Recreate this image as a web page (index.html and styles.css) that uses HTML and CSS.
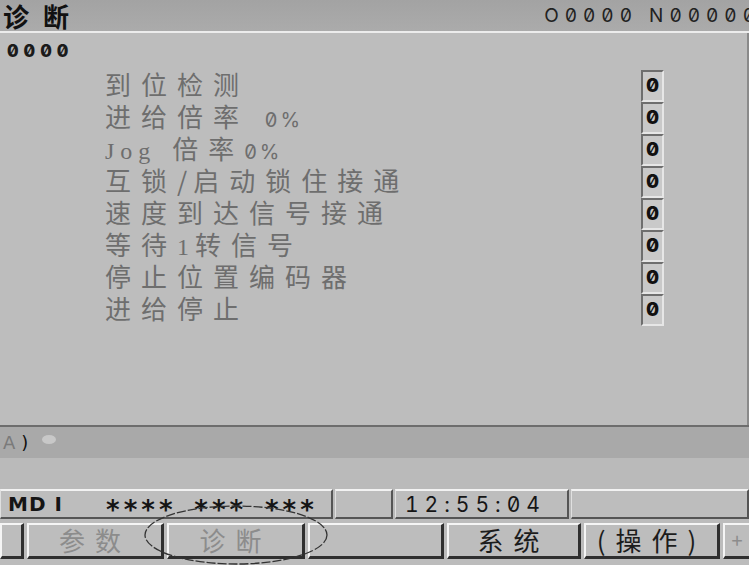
FILE: index.html
```html
<!DOCTYPE html>
<html lang="zh">
  <head>
    <meta charset="UTF-8" />
    <meta name="viewport" content="width=device-width, initial-scale=1" />
    <title>诊断</title>
    <link rel="stylesheet" href="styles.css">
  </head>
  <body>
    <header class="topbar">
      <span class="title">诊断</span>
      <span class="prog">O0000 N00000</span>
    </header>

    <main class="diag">
      <div class="diag-no">0000</div>
      <div class="rows">
        <div class="row"><span class="label">到位检测</span><span class="val">0</span></div>
        <div class="row"><span class="label">进给倍率 <span class="num">0%</span></span><span class="val">0</span></div>
        <div class="row"><span class="label"><span class="lat">Jog</span> 倍率<span class="num">0%</span></span><span class="val">0</span></div>
        <div class="row"><span class="label">互锁<span class="slash">/</span>启动锁住接通</span><span class="val">0</span></div>
        <div class="row"><span class="label">速度到达信号接通</span><span class="val">0</span></div>
        <div class="row"><span class="label">等待<span class="lat">1</span>转信号</span><span class="val">0</span></div>
        <div class="row"><span class="label">停止位置编码器</span><span class="val">0</span></div>
        <div class="row"><span class="label">进给停止</span><span class="val">0</span></div>
      </div>
    </main>

    <div class="input-line">
      <span class="prompt-a">A</span><span class="prompt-b">)</span><span class="cursor"></span>
    </div>
    <div class="msg-line"></div>

    <div class="status">
      <div class="cell mode"><b>MD I</b><span class="stars">**** *** ***</span></div>
      <div class="cell"></div>
      <div class="cell clock">12:55:04</div>
      <div class="cell"></div>
    </div>

    <nav class="softkeys">
      <div class="key"></div>
      <div class="key off">参数</div>
      <div class="key off">诊断</div>
      <div class="key"></div>
      <div class="key">系统</div>
      <div class="key">(操作)</div>
      <div class="key off plus">+</div>
    </nav>

    <svg class="mark" width="186" height="62" viewBox="0 0 186 62">
      <ellipse cx="93" cy="31" rx="91" ry="29" fill="none" stroke="#333" stroke-width="1.3" stroke-dasharray="9 2" />
    </svg>
  </body>
</html>
```

FILE: styles.css
```css
* {
  margin: 0;
  padding: 0;
  box-sizing: border-box;
}
body {
  width: 749px;
  height: 565px;
  overflow: hidden;
  position: relative;
  background: #bdbdbd;
  font-family: "Noto Sans CJK SC", "DejaVu Sans", sans-serif;
  display: flex;
  flex-direction: column;
}

/* Top bar */
.topbar {
  height: 33px;
  background: linear-gradient(#a3a3a3, #ababab);
  border-bottom: 2px solid #ececec;
  display: flex;
  justify-content: space-between;
  align-items: center;
  padding-left: 3px;
}
.title {
  font-size: 26px;
  font-weight: 700;
  color: #111;
  letter-spacing: 14px;
  line-height: 30px;
}
.prog {
  font-family: Inter, sans-serif;
  font-variant-numeric: slashed-zero tabular-nums;
  font-size: 19px;
  color: #222;
  letter-spacing: 6px;
  margin-right: -12px;
}

/* Diagnosis area */
.diag {
  height: 392px;
  border-right: 2px solid #8a8a8a;
  padding-top: 8px;
}
.diag-no {
  font-family: Inter, sans-serif;
  font-variant-numeric: slashed-zero tabular-nums;
  font-weight: 800;
  font-size: 18px;
  line-height: 20px;
  letter-spacing: 5px;
  color: #1a1a1a;
  padding-left: 7px;
}
.rows {
  margin-top: 8px;
  padding-left: 105px;
  padding-right: 83px;
}
.row {
  display: grid;
  grid-template-columns: 1fr 23px;
  height: 32px;
}
.label {
  font-size: 26px;
  line-height: 29px;
  color: #6e6e6e;
  letter-spacing: 10px;
  white-space: nowrap;
}
.label .num {
  font-family: Inter, sans-serif;
  font-variant-numeric: slashed-zero;
  font-size: 20px;
  letter-spacing: 3px;
}
.label .lat {
  font-family: "Liberation Serif", serif;
  font-size: 24px;
  letter-spacing: 6px;
}
.label .slash {
  letter-spacing: 6px;
}
.val {
  height: 32px;
  margin-top: 1px;
  background: #c9c9c9;
  border-top: 2px solid #6e6e6e;
  border-left: 2px solid #6e6e6e;
  border-right: 2px solid #e6e6e6;
  border-bottom: 2px solid #e6e6e6;
  font-family: Inter, sans-serif;
  font-variant-numeric: slashed-zero;
  font-weight: 800;
  font-size: 19px;
  line-height: 27px;
  text-align: center;
  color: #111;
}

/* Input / message lines */
.input-line {
  height: 33px;
  background: #a9a9a9;
  border-top: 2px solid #6d6d6d;
  display: flex;
  align-items: center;
  padding-left: 3px;
  font-family: "DejaVu Sans", sans-serif;
  font-size: 18px;
}
.prompt-a {
  color: #7a7a7a;
  margin-right: 6px;
}
.prompt-b {
  color: #111;
}
.cursor {
  width: 14px;
  height: 9px;
  margin-left: 14px;
  margin-bottom: 6px;
  border-radius: 50%;
  background: #c8c8c8;
}
.msg-line {
  height: 31px;
  background: #bababa;
}

/* Status row */
.status {
  height: 30px;
  display: grid;
  grid-template-columns: 333px 58px 174px 1fr;
  gap: 2px;
  background: #bababa;
}
.cell {
  background: #bdbdbd;
  border-top: 2px solid #f2f2f2;
  border-left: 1px solid #e0e0e0;
  border-right: 2px solid #555;
  border-bottom: 2px solid #555;
  display: flex;
  align-items: center;
  color: #151515;
}
.mode {
  padding-left: 7px;
}
.mode b {
  font-family: "DejaVu Sans", sans-serif;
  font-size: 20px;
  letter-spacing: 1px;
  width: 97px;
  white-space: pre;
}
.stars {
  font-family: "DejaVu Sans Mono", monospace;
  font-weight: 700;
  font-size: 26px;
  height: 26px;
  line-height: 38px;
  letter-spacing: 2px;
  white-space: pre;
}
.clock {
  font-family: Inter, sans-serif;
  font-variant-numeric: slashed-zero tabular-nums;
  font-size: 21px;
  letter-spacing: 6px;
  padding-left: 9px;
}

/* Soft keys */
.softkeys {
  flex-grow: 1;
  display: grid;
  grid-template-columns: 24px 137px 138px 136px 134px 136px 1fr;
  gap: 3px;
  padding: 4px 0 6px;
  background: #bcbcbc;
}
.key {
  background: #bdbdbd;
  border-top: 2px solid #f5f5f5;
  border-left: 2px solid #f5f5f5;
  border-right: 3px solid #2f2f2f;
  border-bottom: 3px solid #2f2f2f;
  font-size: 26px;
  line-height: 30px;
  letter-spacing: 10px;
  text-align: center;
  color: #1c1c1c;
}
.key.off {
  color: #8c8c8c;
}
.key.plus {
  border-right: none;
  letter-spacing: 0;
  font-size: 20px;
}

/* annotation ring */
.mark {
  position: absolute;
  left: 143px;
  top: 504px;
}
```
